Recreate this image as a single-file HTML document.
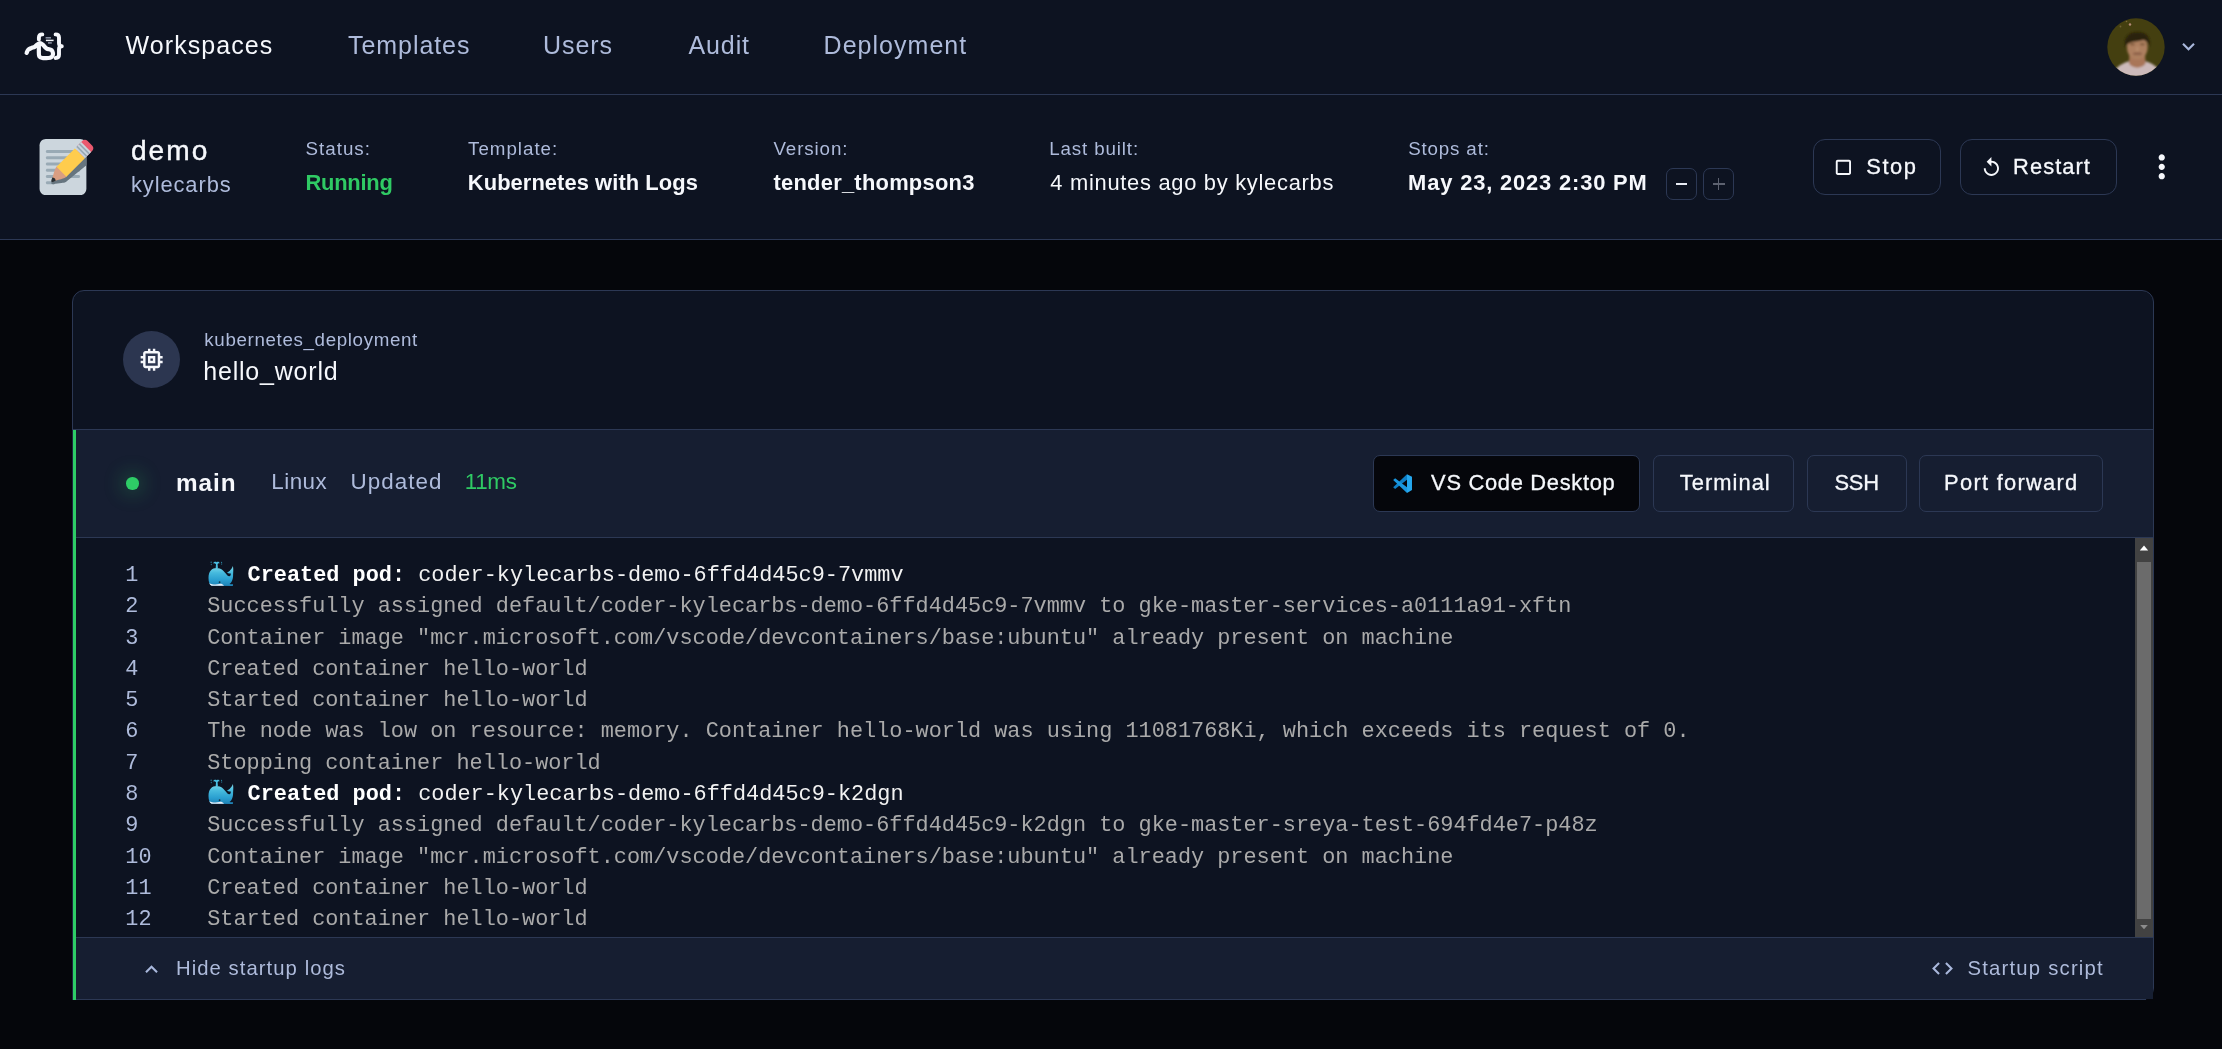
<!DOCTYPE html>
<html lang="en">
<head>
<meta charset="utf-8">
<title>demo - Coder</title>
<style>
*{box-sizing:border-box}
html,body{margin:0;padding:0}
body{width:2222px;height:1049px;overflow:hidden;background:#05060b;position:relative;font-family:"Liberation Sans",sans-serif;color:#f6f8fc}
.abs{position:absolute}
.t{position:absolute;white-space:pre;line-height:1;font-family:"Liberation Sans",sans-serif}
svg{display:block}
#nav{left:0;top:0;width:2222px;height:95px;background:#0d1321;border-bottom:1px solid #2c3854}
#hdr{left:0;top:95px;width:2222px;height:145px;background:#0d1321;border-bottom:1px solid #2c3854}
.btn{position:absolute;border:1px solid #2c3854;border-radius:12px;background:transparent}
.sbtn{position:absolute;border:1px solid #2c3854;border-radius:7px}
#card{left:72px;top:290px;width:2082px;height:710px;border:1px solid #2c3854;border-radius:12px;background:#0d1321}
.div{position:absolute;height:1px;background:#2c3854}
#agent{left:73px;top:430px;width:2080px;height:107px;background:#161e31}
#foot{left:73px;top:938px;width:2080px;height:61px;background:#161e31}
#green{left:73px;top:430px;width:3px;height:570px;background:#2ecc66}
#logs{will-change:transform;left:76px;top:559.5px;width:2059px;height:377px;overflow:hidden;font-family:"Liberation Mono",monospace;font-size:21.875px;line-height:31.29px;color:#aaaaaa}
.ln{position:relative;height:31.29px;padding-left:49.3px;white-space:pre}
.no{display:inline-block;width:81.9px;color:#aebbdb}
.ln b{color:#ffffff;font-weight:700}
.lw{color:#f2f2f2}
.wh{position:absolute;left:131px;top:-.5px}
.ws{display:inline-block;width:27.3px;height:1px}
</style>
</head>
<body>
<div id="nav" class="abs"></div>
<div id="hdr" class="abs"></div>

<!-- logo -->
<svg class="abs" style="left:0;top:0" width="90" height="94" viewBox="0 0 90 94" fill="none" stroke="#f6f8fc" stroke-width="3.9" stroke-linecap="round" stroke-linejoin="round">
<path d="M26.64 52.93C26.89 52.42 27.34 50.70 28.11 49.89C28.88 49.08 30.16 48.56 31.26 48.05C32.35 47.55 33.66 47.43 34.66 46.85C35.67 46.26 36.41 45.17 37.29 44.54C38.16 43.91 38.99 43.07 39.91 43.07C40.83 43.07 41.92 43.84 42.79 44.54C43.67 45.24 44.45 46.55 45.15 47.27C45.85 47.98 46.29 48.49 46.99 48.84C47.69 49.19 48.56 49.12 49.35 49.37C50.13 49.61 51.12 49.74 51.71 50.31C52.29 50.88 52.67 52.01 52.86 52.77C53.05 53.53 53.14 54.11 52.86 54.87C52.58 55.63 51.94 56.81 51.18 57.34C50.42 57.86 49.78 57.90 48.30 58.02C46.81 58.13 43.78 58.32 42.27 58.02C40.76 57.71 39.79 57.27 39.23 56.18C38.66 55.09 38.92 53.12 38.86 51.46C38.80 49.80 38.86 47.09 38.86 46.22" stroke-width="4.2"/>
<path d="M42.3 34.4C40 34.4 38.9 35.6 38.9 37.6L38.9 39.4"/>
<path d="M55.6 34.4C58 34.4 59 35.6 59 37.6L59 43.2C59 45.2 60 46.2 61.8 46.2C60 46.2 59 47.2 59 49.2L59 54.8C59 56.8 58 58 55.6 58"/>
<path d="M45.6 37.8H51" stroke="#8f96a8" stroke-width="1.5" stroke-linecap="butt"/>
<path d="M45.9 40.4H53.6" stroke-width="1.5" stroke-linecap="butt"/>
<path d="M48 42.9H51.8" stroke="#8f96a8" stroke-width="1.5" stroke-linecap="butt"/>
</svg>

<!-- avatar -->
<svg class="abs" style="left:2106.5px;top:17.5px" width="58" height="58" viewBox="0 0 58 58">
<defs><clipPath id="av"><circle cx="29" cy="29" r="28.700"/></clipPath><filter id="avb" x="-20%" y="-20%" width="140%" height="140%"><feGaussianBlur stdDeviation="0.9"/></filter></defs>
<g clip-path="url(#av)">
<rect width="58" height="58" fill="#443f10"/>
<g filter="url(#avb)">
<path d="M2 62C5 52 13 46 21 43.500L39.500 43.500C47 46 54 51 58 62Z" fill="#ccbaba"/>
<path d="M22.500 34L22 45.500C25 51 35.500 51 38.500 45.500L38 34Z" fill="#a97658"/>
<ellipse cx="30.300" cy="29.500" rx="10.300" ry="12.300" fill="#ad7f5f"/>
<path d="M18 29C16 18.500 22.500 14 30.500 14C38.500 14 44.500 18.500 42.500 29C41.500 25 40 22.500 36 22C31 24 25 23 21.500 25.500C20 26.500 19 27.500 18 29Z" fill="#2b2307"/>
<ellipse cx="25.400" cy="26.300" rx="2.600" ry="1.100" fill="#7a5638"/><ellipse cx="35.400" cy="26.300" rx="2.600" ry="1.100" fill="#7a5638"/>
<ellipse cx="30.500" cy="35.800" rx="4.600" ry="1.300" fill="#8a5d47"/>
<ellipse cx="30.300" cy="31" rx="1.500" ry="2.600" fill="#b88c6c"/>
</g>
<circle cx="23" cy="6.500" r="1.200" fill="#b58a78"/><circle cx="19.500" cy="3.500" r=".8" fill="#7d6b3a"/><circle cx="13.500" cy="8.500" r=".9" fill="#6f6130"/>
</g>
</svg>
<svg class="abs" style="left:2176px;top:34px" width="25" height="25" viewBox="0 0 24 24"><path fill="#a9b8dc" d="M7.41 8.59 12 13.17l4.59-4.58L18 10l-6 6-6-6 1.41-1.410z"/></svg>

<!-- memo emoji -->
<svg class="abs" style="left:38px;top:138.7px" width="56.2" height="56.2" viewBox="0 0 36 36"><path fill="#CCD6DD" d="M31 32c0 2.209-1.791 4-4 4H5c-2.209 0-4-1.791-4-4V4c0-2.209 1.791-4 4-4h22c2.209 0 4 1.791 4 4v28z"/><path fill="#99AAB5" d="M27 24c0 .553-.447 1-1 1H6c-.552 0-1-.447-1-1 0-.553.448-1 1-1h20c.553 0 1 .447 1 1zm-16 4c0 .553-.448 1-1 1H6c-.552 0-1-.447-1-1 0-.553.448-1 1-1h4c.552 0 1 .447 1 1zM27 8c0 .552-.447 1-1 1H6c-.552 0-1-.448-1-1s.448-1 1-1h20c.553 0 1 .448 1 1zm0 4c0 .553-.447 1-1 1H6c-.552 0-1-.447-1-1 0-.553.448-1 1-1h20c.553 0 1 .447 1 1zm0 4c0 .553-.447 1-1 1H6c-.552 0-1-.447-1-1 0-.553.448-1 1-1h20c.553 0 1 .447 1 1zm0 4c0 .553-.447 1-1 1H6c-.552 0-1-.447-1-1 0-.553.448-1 1-1h20c.553 0 1 .447 1 1z"/><clipPath id="mp"><rect x="1" y="0" width="30" height="36"/></clipPath><path clip-path="url(#mp)" fill="#66757F" d="M31 6.272c-.827-.535-1.837-.579-2.521-.023l-.792.646-1.484 1.211-.1.080-2.376 1.938-11.878 9.686c-.437.357-.793 1.219-1.173 2.074-.378.850-.969 2.852-1.443 4.391-.148.250-1.065 1.846-.551 2.453.520.615 2.326.010 2.568-.076 1.626-.174 3.731-.373 4.648-.580.924-.211 1.854-.395 2.291-.752.008-.006.010-.018.017-.023l11.858-9.666.792-.646.807-.658c.433-.352.705-.838.837-1.391V6.272z"/><path fill="#D99E82" d="M18.145 22.526s-1.274-1.881-2.117-2.553c-.672-.843-2.549-2.116-2.549-2.116-.448-.446-1.191-.480-1.629-.043-.437.438-.793 1.366-1.173 2.291-.472 1.146-1.276 4.154-1.768 5.752-.083.272.517-.450.503-.181-.010.187.027.394.074.581l-.146.159.208.067c.025.082.050.154.068.210l.159-.146c.187.047.394.084.580.074.269-.014-.453.587-.181.503 1.598-.493 4.607-1.296 5.752-1.768.924-.381 1.853-.736 2.290-1.174.440-.436.377-1.209-.071-1.656z"/><path fill="#EA596E" d="M25.312 4.351c-.876.875-.876 2.293 0 3.168l3.167 3.168c.876.874 2.294.874 3.168 0l3.169-3.168c.874-.875.874-2.293 0-3.168l-3.169-3.168c-.874-.875-2.292-.875-3.168 0l-3.167 3.168z"/><path fill="#FFCC4D" d="M11.849 17.815l3.170 3.170 3.165 3.166 11.881-11.879-6.337-6.336-11.879 11.879z"/><path fill="#292F33" d="M11.298 26.742s-2.060 1.133-2.616.576c-.557-.558.581-2.611.581-2.611s1.951.036 2.035 2.035z"/><path fill="#CCD6DD" d="M23.728 5.935l3.960-3.960 6.336 6.337-3.960 3.960z"/><path fill="#99AAB5" d="M26.103 3.558l.792-.792 6.336 6.335-.792.792zM24.520 5.142l.791-.791 6.336 6.335-.792.792z"/></svg>

<!-- header buttons -->
<div class="sbtn" style="left:1666px;top:168px;width:31px;height:32px"></div>
<div class="abs" style="left:1675.800px;top:183px;width:11.700px;height:1.900px;background:#e8ebf3"></div>
<div class="sbtn" style="left:1703px;top:168px;width:31px;height:32px"></div>
<div class="abs" style="left:1712.500px;top:183px;width:12px;height:1.900px;background:#5d6270"></div>
<div class="abs" style="left:1717.500px;top:178px;width:1.900px;height:12px;background:#5d6270"></div>

<div class="btn" style="left:1813px;top:139px;width:128px;height:56px"></div>
<svg class="abs" style="left:1831.500px;top:155.900px" width="22.800" height="22.800" viewBox="0 0 24 24"><path fill="#f6f8fc" d="M18 4H6c-1.100 0-2 .9-2 2v12c0 1.100.9 2 2 2h12c1.100 0 2-.9 2-2V6c0-1.100-.9-2-2-2zm0 14H6V6h12v12z"/></svg>
<div class="btn" style="left:1960px;top:139px;width:157px;height:56px"></div>
<svg class="abs" style="left:1979.700px;top:156.300px" width="22.800" height="22.800" viewBox="0 0 24 24"><path fill="#f6f8fc" d="M12 5V1L7 6l5 5V7c3.310 0 6 2.690 6 6s-2.690 6-6 6-6-2.690-6-6H4c0 4.420 3.580 8 8 8s8-3.580 8-8-3.580-8-8-8z"/></svg>
<svg class="abs" style="left:2142.900px;top:148.300px" width="37.500" height="37.500" viewBox="0 0 24 24"><path fill="#f6f8fc" d="M12 8c1.100 0 2-.9 2-2s-.9-2-2-2-2 .9-2 2 .9 2 2 2zm0 2c-1.100 0-2 .9-2 2s.9 2 2 2 2-.9 2-2-.9-2-2-2zm0 6c-1.100 0-2 .9-2 2s.9 2 2 2 2-.9 2-2-.9-2-2-2z"/></svg>

<!-- card -->
<div id="card" class="abs"></div>
<div class="div" style="left:73px;top:429px;width:2080px"></div>
<div id="agent" class="abs"></div>
<div class="div" style="left:73px;top:537px;width:2080px"></div>
<div class="div" style="left:73px;top:937px;width:2080px"></div>
<div id="foot" class="abs"></div>
<div class="div" style="left:76px;top:999px;width:2070px"></div>
<div class="abs" style="left:72px;top:430px;width:1px;height:570px;background:#1f2540"></div>
<div id="green" class="abs"></div>

<!-- resource icon -->
<div class="abs" style="left:122.700px;top:331px;width:57.400px;height:57.400px;border-radius:50%;background:#2c3650"></div>
<svg class="abs" style="left:136.800px;top:344.800px" width="29.300" height="29.300" viewBox="0 0 24 24"><path fill="#f6f8fc" d="M15 9H9v6h6V9zm-2 4h-2v-2h2v2zm8-2V9h-2V7c0-1.100-.9-2-2-2h-2V3h-2v2h-2V3H9v2H7c-1.100 0-2 .9-2 2v2H3v2h2v2H3v2h2v2c0 1.100.9 2 2 2h2v2h2v-2h2v2h2v-2h2c1.100 0 2-.9 2-2v-2h2v-2h-2v-2h2zm-4 6H7V7h10v10z"/></svg>

<!-- agent status dot -->
<div class="abs" style="left:126.250px;top:477.250px;width:12.500px;height:12.500px;border-radius:50%;background:#2ecc66;box-shadow:0 0 19px 4px rgba(48,192,92,.28)"></div>

<!-- agent buttons -->
<div class="btn" style="left:1373px;top:455px;width:267px;height:57px;border-radius:7px;background:#05060b"></div>
<svg class="abs" style="left:1392.800px;top:473.800px" width="19.200" height="19.200" viewBox="0 0 100 100"><path fill="#0f7fc6" d="M73 1.700L73 30.400L11 78L1 69Z"/><path fill="#1a97df" d="M1 31L11 22L73 69.600L73 99Z"/><path fill="#25a7ee" d="M73 1.700L99 14.800L99 83.500L73 99Z"/></svg>
<div class="btn" style="left:1653px;top:455px;width:141px;height:57px;border-radius:7px"></div>
<div class="btn" style="left:1807px;top:455px;width:100px;height:57px;border-radius:7px"></div>
<div class="btn" style="left:1919px;top:455px;width:184px;height:57px;border-radius:7px"></div>

<!-- logs -->
<div id="logs" class="abs">
<div class="ln"><span class="no">1</span><svg class="wh" viewBox="0 0 27.3 27" width="27.3" height="27"><defs><linearGradient id="wg" x1="0" y1="0" x2="0" y2="1"><stop offset="0" stop-color="#7fdcee"/><stop offset=".35" stop-color="#45b9dd"/><stop offset=".7" stop-color="#2a9fd0"/><stop offset="1" stop-color="#1f82b6"/></linearGradient></defs><path fill="url(#wg)" d="M1.5 18C1.5 11 5 7.9 9.6 7.9C14 7.9 17 11 18.8 13.5C20 15.3 21.3 16.6 22.5 16.2C23.8 15.6 24 14.5 23.6 13.2C22.5 13.6 21 13.3 20 12.5C21.5 11.8 23 11 23.3 10C24.5 9 25.3 7.5 25.8 5.9C26.5 8 26.4 11 26.1 14.5C26.2 18 25.5 22 22.5 24C24 24.2 25.5 24.3 26.1 24.3L25.8 25.9L4.6 25.7C2.5 25 1.5 22 1.5 18Z"/><path fill="#49bfe3" d="M8.7 7.9L9 4.2C8 3 7 3.2 6 3.4C6.6 1.8 8.5 1.3 9.7 2.2C10.9 1.3 12.3 1.8 12.8 3.3C12 3.1 11.2 3 10.6 4.2L10.9 7.9Z"/><path fill="#2d8aa8" d="M3.8 1.6l1 .2-.3 1.2-1-.3zM4 3.8l.8.3-.3 1.2-.8-.4zM14.3 1.8l.9.3-.3 1.1-.9-.3zM14.5 3.6l.8.2-.3 1-.8-.3z"/><path fill="#e9eef7" d="M2.3 23.2C5 24.6 9 24.8 12.5 24C14 23.6 15.5 24 17 25.7L4.6 25.7C3.5 25.3 2.7 24.4 2.3 23.2Z"/><circle cx="12.6" cy="22.2" r=".9" fill="#12354a"/></svg><span class="ws"></span><b> Created pod:</b> <span class="lw">coder-kylecarbs-demo-6ffd4d45c9-7vmmv</span></div>
<div class="ln"><span class="no">2</span><span class="lg">Successfully assigned default/coder-kylecarbs-demo-6ffd4d45c9-7vmmv to gke-master-services-a0111a91-xftn</span></div>
<div class="ln"><span class="no">3</span><span class="lg">Container image &quot;mcr.microsoft.com/vscode/devcontainers/base:ubuntu&quot; already present on machine</span></div>
<div class="ln"><span class="no">4</span><span class="lg">Created container hello-world</span></div>
<div class="ln"><span class="no">5</span><span class="lg">Started container hello-world</span></div>
<div class="ln"><span class="no">6</span><span class="lg">The node was low on resource: memory. Container hello-world was using 11081768Ki, which exceeds its request of 0.</span></div>
<div class="ln"><span class="no">7</span><span class="lg">Stopping container hello-world</span></div>
<div class="ln"><span class="no">8</span><svg class="wh" viewBox="0 0 27.3 27" width="27.3" height="27"><defs><linearGradient id="wg" x1="0" y1="0" x2="0" y2="1"><stop offset="0" stop-color="#7fdcee"/><stop offset=".35" stop-color="#45b9dd"/><stop offset=".7" stop-color="#2a9fd0"/><stop offset="1" stop-color="#1f82b6"/></linearGradient></defs><path fill="url(#wg)" d="M1.5 18C1.5 11 5 7.9 9.6 7.9C14 7.9 17 11 18.8 13.5C20 15.3 21.3 16.6 22.5 16.2C23.8 15.6 24 14.5 23.6 13.2C22.5 13.6 21 13.3 20 12.5C21.5 11.8 23 11 23.3 10C24.5 9 25.3 7.5 25.8 5.9C26.5 8 26.4 11 26.1 14.5C26.2 18 25.5 22 22.5 24C24 24.2 25.5 24.3 26.1 24.3L25.8 25.9L4.6 25.7C2.5 25 1.5 22 1.5 18Z"/><path fill="#49bfe3" d="M8.7 7.9L9 4.2C8 3 7 3.2 6 3.4C6.6 1.8 8.5 1.3 9.7 2.2C10.9 1.3 12.3 1.8 12.8 3.3C12 3.1 11.2 3 10.6 4.2L10.9 7.9Z"/><path fill="#2d8aa8" d="M3.8 1.6l1 .2-.3 1.2-1-.3zM4 3.8l.8.3-.3 1.2-.8-.4zM14.3 1.8l.9.3-.3 1.1-.9-.3zM14.5 3.6l.8.2-.3 1-.8-.3z"/><path fill="#e9eef7" d="M2.3 23.2C5 24.6 9 24.8 12.5 24C14 23.6 15.5 24 17 25.7L4.6 25.7C3.5 25.3 2.7 24.4 2.3 23.2Z"/><circle cx="12.6" cy="22.2" r=".9" fill="#12354a"/></svg><span class="ws"></span><b> Created pod:</b> <span class="lw">coder-kylecarbs-demo-6ffd4d45c9-k2dgn</span></div>
<div class="ln"><span class="no">9</span><span class="lg">Successfully assigned default/coder-kylecarbs-demo-6ffd4d45c9-k2dgn to gke-master-sreya-test-694fd4e7-p48z</span></div>
<div class="ln"><span class="no">10</span><span class="lg">Container image &quot;mcr.microsoft.com/vscode/devcontainers/base:ubuntu&quot; already present on machine</span></div>
<div class="ln"><span class="no">11</span><span class="lg">Created container hello-world</span></div>
<div class="ln"><span class="no">12</span><span class="lg">Started container hello-world</span></div>
</div>

<!-- scrollbar -->
<div class="abs" style="left:2135px;top:538px;width:18px;height:399px;background:#424242"></div>
<div class="abs" style="left:2137px;top:562px;width:14px;height:357px;background:#6b6b6b"></div>
<svg class="abs" style="left:2135px;top:538px" width="18" height="399" viewBox="0 0 18 399"><path fill="#ffffff" d="M4.800 12.400L13.200 12.400L9 7.500Z"/><path fill="#8c8c8c" d="M5.200 387L12.800 387L9 391.300Z"/></svg>

<!-- footer icons -->
<svg class="abs" style="left:138.850px;top:956.500px" width="25" height="25" viewBox="0 0 24 24"><path fill="#a9b8dc" d="M7.410 15.410 12 10.830l4.590 4.580L18 14l-6-6-6 6z"/></svg>
<svg class="abs" style="left:1929.700px;top:955.950px" width="25" height="25" viewBox="0 0 24 24"><path fill="#a9b8dc" d="M9.400 16.600 4.800 12l4.600-4.600L8 6l-6 6 6 6 1.400-1.400zm5.200 0 4.600-4.600-4.600-4.600L16 6l6 6-6 6-1.400-1.400z"/></svg>

<div id="txt" class="abs" style="left:0;top:0;width:2222px;height:1049px;will-change:transform">
<span class="t" style="left:125.60px;top:33.14px;font-size:25px;font-weight:400;color:#f6f8fc;letter-spacing:1.067px">Workspaces</span>
<span class="t" style="left:348.00px;top:33.14px;font-size:25px;font-weight:400;color:#aebbdb;letter-spacing:0.938px">Templates</span>
<span class="t" style="left:543.00px;top:33.14px;font-size:25px;font-weight:400;color:#aebbdb;letter-spacing:0.950px">Users</span>
<span class="t" style="left:688.60px;top:33.14px;font-size:25px;font-weight:400;color:#aebbdb;letter-spacing:0.850px">Audit</span>
<span class="t" style="left:823.60px;top:33.14px;font-size:25px;font-weight:400;color:#aebbdb;letter-spacing:1.022px">Deployment</span>
<span class="t" style="left:131.00px;top:136.51px;font-size:28.1px;font-weight:400;color:#f6f8fc;letter-spacing:2.000px;-webkit-text-stroke:.45px">demo</span>
<span class="t" style="left:131.00px;top:173.76px;font-size:21.9px;font-weight:400;color:#aebbdb;letter-spacing:0.900px">kylecarbs</span>
<span class="t" style="left:305.50px;top:140.43px;font-size:18.75px;font-weight:400;color:#aebbdb;letter-spacing:1.017px">Status:</span>
<span class="t" style="left:305.50px;top:171.76px;font-size:21.9px;font-weight:700;color:#2fca64;letter-spacing:-0.250px">Running</span>
<span class="t" style="left:468.10px;top:140.43px;font-size:18.75px;font-weight:400;color:#aebbdb;letter-spacing:0.975px">Template:</span>
<span class="t" style="left:467.80px;top:171.76px;font-size:21.9px;font-weight:700;color:#f6f8fc;letter-spacing:0.074px">Kubernetes with Logs</span>
<span class="t" style="left:773.50px;top:140.43px;font-size:18.75px;font-weight:400;color:#aebbdb;letter-spacing:0.886px">Version:</span>
<span class="t" style="left:773.50px;top:171.76px;font-size:21.9px;font-weight:700;color:#f6f8fc;letter-spacing:0.253px">tender_thompson3</span>
<span class="t" style="left:1049.30px;top:140.43px;font-size:18.75px;font-weight:400;color:#aebbdb;letter-spacing:0.860px">Last built:</span>
<span class="t" style="left:1050.30px;top:171.76px;font-size:21.9px;font-weight:400;color:#f6f8fc;letter-spacing:0.712px">4 minutes ago by kylecarbs</span>
<span class="t" style="left:1408.20px;top:140.43px;font-size:18.75px;font-weight:400;color:#aebbdb;letter-spacing:0.838px">Stops at:</span>
<span class="t" style="left:1408.10px;top:171.76px;font-size:21.9px;font-weight:700;color:#f6f8fc;letter-spacing:0.842px">May 23, 2023 2:30 PM</span>
<span class="t" style="left:1866.20px;top:155.76px;font-size:21.9px;font-weight:400;color:#f6f8fc;letter-spacing:1.600px;-webkit-text-stroke:.3px">Stop</span>
<span class="t" style="left:2013.10px;top:155.76px;font-size:21.9px;font-weight:400;color:#f6f8fc;letter-spacing:1.050px;-webkit-text-stroke:.3px">Restart</span>
<span class="t" style="left:204.30px;top:331.43px;font-size:18.75px;font-weight:400;color:#aebbdb;letter-spacing:0.645px">kubernetes_deployment</span>
<span class="t" style="left:203.30px;top:359.14px;font-size:25px;font-weight:400;color:#f6f8fc;letter-spacing:0.790px">hello_world</span>
<span class="t" style="left:176.00px;top:470.73px;font-size:24.3px;font-weight:700;color:#f6f8fc;letter-spacing:1.000px">main</span>
<span class="t" style="left:271.30px;top:471.34px;font-size:22.4px;font-weight:400;color:#aebbdb;letter-spacing:0.475px">Linux</span>
<span class="t" style="left:350.50px;top:471.34px;font-size:22.4px;font-weight:400;color:#aebbdb;letter-spacing:1.033px">Updated</span>
<span class="t" style="left:464.80px;top:471.34px;font-size:22.4px;font-weight:400;color:#2fca64;letter-spacing:-0.333px">11ms</span>
<span class="t" style="left:1431.10px;top:471.76px;font-size:21.9px;font-weight:400;color:#f6f8fc;letter-spacing:0.693px;-webkit-text-stroke:.3px">VS Code Desktop</span>
<span class="t" style="left:1679.80px;top:471.76px;font-size:21.9px;font-weight:400;color:#f6f8fc;letter-spacing:1.029px;-webkit-text-stroke:.3px">Terminal</span>
<span class="t" style="left:1834.40px;top:471.76px;font-size:21.9px;font-weight:400;color:#f6f8fc;letter-spacing:-0.200px;-webkit-text-stroke:.3px">SSH</span>
<span class="t" style="left:1944.10px;top:471.76px;font-size:21.9px;font-weight:400;color:#f6f8fc;letter-spacing:1.264px;-webkit-text-stroke:.3px">Port forward</span>
<span class="t" style="left:176.00px;top:958.12px;font-size:20.3px;font-weight:400;color:#aebbdb;letter-spacing:1.050px">Hide startup logs</span>
<span class="t" style="left:1967.50px;top:958.12px;font-size:20.3px;font-weight:400;color:#aebbdb;letter-spacing:1.208px">Startup script</span>
</div>
</body>
</html>
